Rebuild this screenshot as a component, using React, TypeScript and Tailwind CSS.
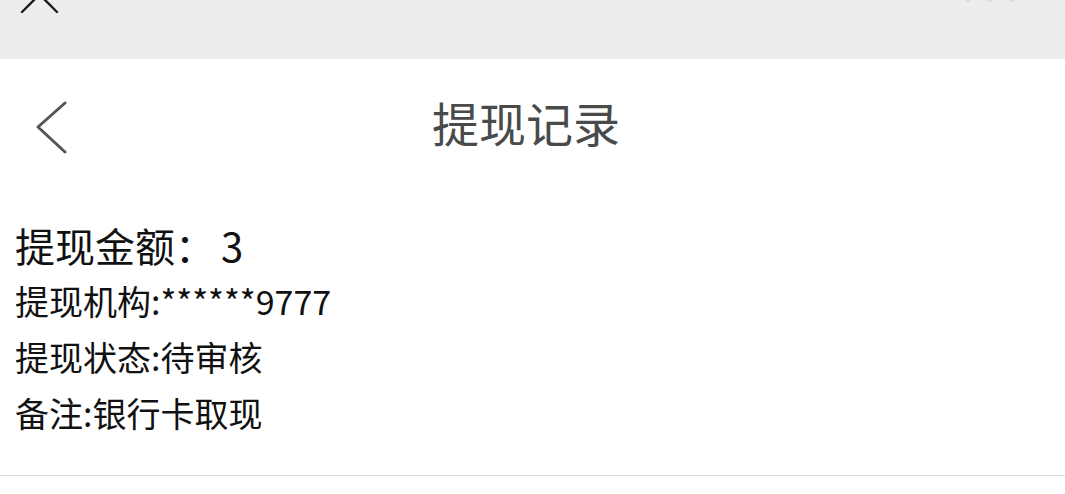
import React from 'react';

const rows = [
  { label: '提现机构:', value: '******9777' },
  { label: '提现状态:', value: '待审核' },
  { label: '备注:', value: '银行卡取现' },
];

export default function App(): React.ReactElement {
  return (
    <div
      className="w-[1065px] h-[494px] bg-white overflow-hidden"
      style={{ fontFamily: '"Noto Sans CJK SC", "Noto Sans", sans-serif' }}
    >
      {/* webview top bar */}
      <div className="relative h-[59px] bg-[#ededed] overflow-hidden">
        <svg className="absolute left-[16px] top-[-24px]" width="48" height="40" viewBox="0 0 48 40">
          <path d="M6 36 L41 1 M6 1 L41 36" stroke="#1a1a1a" strokeWidth="2.4" strokeLinecap="round" fill="none" />
        </svg>
        <div className="absolute right-[50px] top-[-4px] flex gap-[16px]">
          <span className="w-[6px] h-[6px] rounded-full bg-[#dcdcdc]" />
          <span className="w-[6px] h-[6px] rounded-full bg-[#dcdcdc]" />
          <span className="w-[6px] h-[6px] rounded-full bg-[#dcdcdc]" />
        </div>
      </div>

      {/* page header */}
      <div className="relative h-[124px] flex items-center justify-center">
        <svg className="absolute left-[34px] top-[41px]" width="34" height="54" viewBox="0 0 34 54">
          <path d="M31 3 L4 27 L31 52" stroke="#555555" strokeWidth="3" strokeLinecap="round" strokeLinejoin="round" fill="none" />
        </svg>
        <h1 className="mr-[13px] text-[47px] leading-none text-[#4a4a4a] font-normal">提现记录</h1>
      </div>

      {/* record */}
      <div className="pt-[34px] pb-[34px] pl-[15px] border-b border-[#dddddd] text-[#111111]">
        <div className="h-[56px] flex items-center text-[40px] leading-none">
          <span>提现金额：</span>
          <span className="ml-[6px]">3</span>
        </div>
        {rows.map(row => (
          <div key={row.label} className="h-[56px] flex items-center text-[34px] leading-none">
            <span>{row.label}</span>
            <span>{row.value}</span>
          </div>
        ))}
      </div>
    </div>
  );
}
